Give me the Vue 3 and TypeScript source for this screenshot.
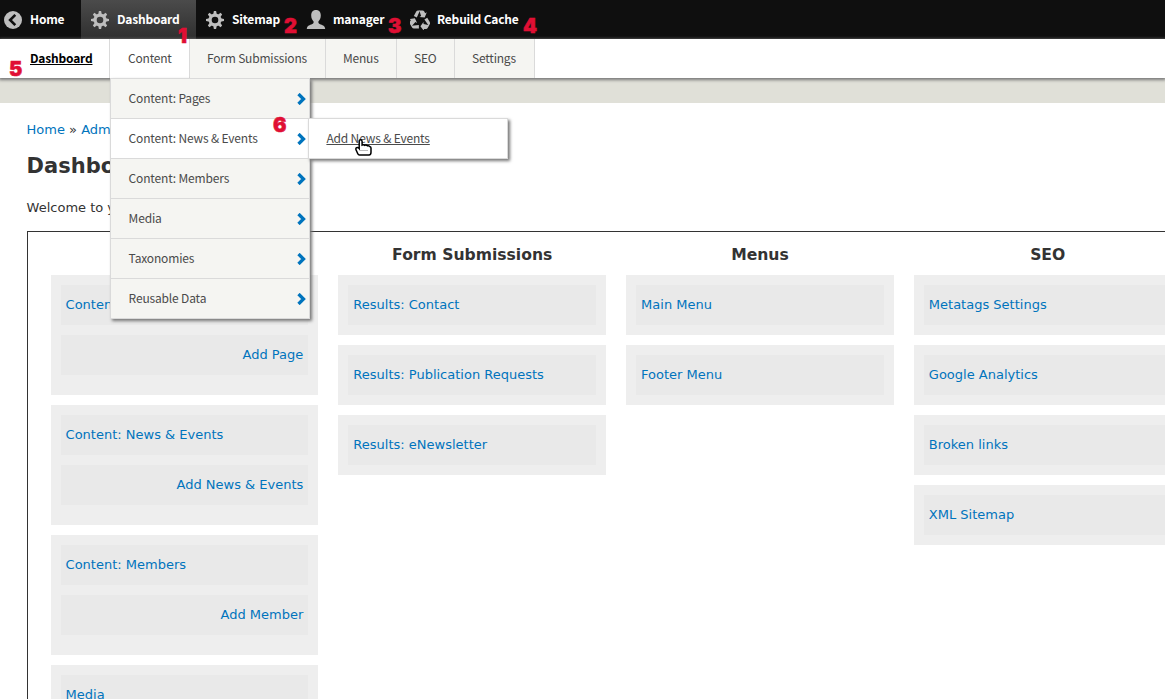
<script setup lang="ts">
interface TopItem { label: string; icon: 'back' | 'gear' | 'user' | 'recycle'; width: number; active?: boolean }
interface Tab { label: string; width: number; state?: 'current' | 'open' }
interface Card { title: string; action?: string }
interface Column { title: string; cards: Card[] }

const topItems: TopItem[] = [
  { label: 'Home', icon: 'back', width: 81 },
  { label: 'Dashboard', icon: 'gear', width: 115, active: true },
  { label: 'Sitemap', icon: 'gear', width: 101 },
  { label: 'manager', icon: 'user', width: 104 },
  { label: 'Rebuild Cache', icon: 'recycle', width: 140 },
]

const tabs: Tab[] = [
  { label: 'Dashboard', width: 110, state: 'current' },
  { label: 'Content', width: 80, state: 'open' },
  { label: 'Form Submissions', width: 136 },
  { label: 'Menus', width: 71 },
  { label: 'SEO', width: 58 },
  { label: 'Settings', width: 80 },
]

const menu: string[] = [
  'Content: Pages',
  'Content: News & Events',
  'Content: Members',
  'Media',
  'Taxonomies',
  'Reusable Data',
]
const openIndex = 1

const columns: Column[] = [
  {
    title: 'Content',
    cards: [
      { title: 'Content: Pages', action: 'Add Page' },
      { title: 'Content: News & Events', action: 'Add News & Events' },
      { title: 'Content: Members', action: 'Add Member' },
      { title: 'Media' },
    ],
  },
  {
    title: 'Form Submissions',
    cards: [
      { title: 'Results: Contact' },
      { title: 'Results: Publication Requests' },
      { title: 'Results: eNewsletter' },
    ],
  },
  { title: 'Menus', cards: [{ title: 'Main Menu' }, { title: 'Footer Menu' }] },
  {
    title: 'SEO',
    cards: [
      { title: 'Metatags Settings' },
      { title: 'Google Analytics' },
      { title: 'Broken links' },
      { title: 'XML Sitemap' },
    ],
  },
]

const teeth = [0, 45, 90, 135, 180, 225, 270, 315]
</script>

<template>
  <div class="page">
    <header class="topbar">
      <a v-for="item in topItems" :key="item.label" class="top-item" :class="{ active: item.active }" :style="{ width: item.width + 'px' }">
        <svg v-if="item.icon === 'back'" class="icon" viewBox="0 0 20 20">
          <circle cx="10" cy="10" r="9" fill="#bebebe" />
          <path d="M12.300 4.800 7.100 10l5.200 5.200" fill="none" stroke="#0f0f0f" stroke-width="2.600" />
        </svg>
        <svg v-else-if="item.icon === 'gear'" class="icon" viewBox="0 0 20 20">
          <path v-for="t in teeth" :key="t" d="M8.200 4.600 8.900 1h2.200l.7 3.600z" fill="#bebebe" :transform="`rotate(${t} 10 10)`" />
          <circle cx="10" cy="10" r="4.900" fill="none" stroke="#bebebe" stroke-width="3.200" />
        </svg>
        <svg v-else-if="item.icon === 'user'" class="icon" viewBox="0 0 20 20">
          <path d="M10 .1c3.200 0 4.800 2.200 4.800 5.300 0 2.700-1.100 4.600-2.400 6v1.200c0 .9.7 1.300 2.300 1.900 2.600 1 4.300 1.500 4.500 4.500H.8c.2-3 1.900-3.500 4.500-4.500 1.600-.6 2.300-1 2.300-1.900v-1.200c-1.300-1.400-2.400-3.300-2.400-6C5.200 2.300 6.800.1 10 .1z" fill="#bebebe" />
        </svg>
        <svg v-else class="icon" viewBox="0 0 20 20">
          <g v-for="r in [0, 120, 240]" :key="r" :transform="`rotate(${r} 10 10.700)`" fill="#bebebe">
            <path d="M3.800 5.900 6.300 1.400Q6.900.4 8 .4L10 .6 6.800 7.500z" />
            <path d="M9.300.4h3.300q1 0 1.500.9l1.100 1.900 1.600-.9-2.100 5.200-5.300-.5 1.700-1z" />
          </g>
        </svg>
        <span>{{ item.label }}</span>
      </a>
    </header>

    <nav class="tabs">
      <div v-for="tab in tabs" :key="tab.label" class="tab" :class="tab.state" :style="{ width: tab.width + 'px' }">
        <span>{{ tab.label }}</span>
        <ul v-if="tab.state === 'open'" class="menu">
          <li v-for="(entry, i) in menu" :key="entry" :class="{ hovered: i === openIndex }">
            <span>{{ entry }}</span>
            <svg class="chevron" viewBox="0 0 9 12"><path d="M1.500 1 6.500 6l-5 5" fill="none" stroke="#0074bd" stroke-width="3.300" /></svg>
            <div v-if="i === openIndex" class="submenu"><a>Add News &amp; Events</a></div>
          </li>
        </ul>
      </div>
    </nav>

    <div class="band"></div>

    <main>
      <div class="crumbs"><a>Home</a> » <a>Administration</a></div>
      <h1>Dashboard</h1>
      <p>Welcome to your dashboard.</p>
      <div class="board">
        <section v-for="col in columns" :key="col.title" class="column">
          <h2>{{ col.title }}</h2>
          <div v-for="card in col.cards" :key="card.title" class="card" :class="{ double: card.action }">
            <div class="row"><a>{{ card.title }}</a></div>
            <div v-if="card.action" class="row action"><a>{{ card.action }}</a></div>
          </div>
        </section>
      </div>
    </main>

    <b class="mark m1">1</b>
    <b class="mark m2">2</b>
    <b class="mark m3">3</b>
    <b class="mark m4">4</b>
    <b class="mark m5">5</b>
    <b class="mark m6">6</b>

    <svg class="cursor" viewBox="0 0 17 17">
      <path d="M4.200 9.500V2.500q0-1.700 1.400-1.700T7.100 2.500V6q1.500-.7 2.700.3 1.500-.6 2.600.5 1.400-.4 2.200.6 1.400.2 1.400 1.700v4.200q0 2.700-2 2.700H4.500q-1.200 0-1.700-1.200L.9 10.500q-.3-2 1.500-2 1 0 1.800 1z" fill="#fff" stroke="#000" stroke-width="1.500" />
      <path d="M5.500 11.500h8" stroke="#777" stroke-width="1" stroke-dasharray="1 1" />
    </svg>
  </div>
</template>

<style>
html,
body {
  margin: 0;
  overflow: hidden;
}
</style>

<style scoped>
.page {
  position: relative;
  width: 1165px;
  height: 699px;
  overflow: hidden;
  background: #fff;
  color: #333;
  font: 13px/20px "DejaVu Sans", sans-serif;
}
.topbar {
  display: flex;
  height: 39px;
  background: #0f0f0f;
  font: bold 12px/37px "Noto Sans CJK SC", sans-serif;
  letter-spacing: -0.2px;
  color: #fff;
}
.top-item {
  box-sizing: border-box;
  display: flex;
  align-items: center;
  padding-left: 9px;
  gap: 7px;
  white-space: nowrap;
}
.top-item span {
  padding-bottom: 2px;
}
.top-item:first-child {
  padding-left: 3px;
}
.top-item.active {
  background: linear-gradient(#4b4b4b, #2f2f2f);
}
.icon {
  width: 20px;
  height: 20px;
  flex: none;
}
.tabs {
  position: relative;
  z-index: 2;
  display: flex;
  height: 39px;
  background: #fff;
  box-shadow: 0 1px 3px 1px #777;
  font: 12px/38px "Noto Sans CJK SC", sans-serif;
  letter-spacing: -0.2px;
  color: #4a4a4a;
}
.tab {
  position: relative;
  box-sizing: border-box;
  padding-left: 17px;
  border-right: 1px solid #dadada;
  background: #f5f5f2;
  white-space: nowrap;
}
.tab.current {
  padding-left: 30px;
  background: #fff;
  color: #000;
  font-weight: bold;
  text-decoration: underline;
}
.tab.open {
  padding-left: 18px;
  background: #fff;
}
.menu {
  position: absolute;
  top: 39px;
  left: 0;
  width: 198px;
  margin: 0;
  padding: 0;
  border: 1px solid #dadada;
  border-top: 0;
  background: #f5f5f2;
  list-style: none;
  letter-spacing: -0.16px;
  box-shadow: 2px 2px 3px #777;
}
.menu li {
  position: relative;
  display: flex;
  align-items: center;
  justify-content: space-between;
  box-sizing: border-box;
  height: 40px;
  padding: 0 3px 1px 17.6px;
  border-top: 1px solid #dadada;
}
.menu li.hovered {
  background: #fff;
}
.chevron {
  width: 9px;
  height: 12px;
  margin-top: 2px;
}
.submenu {
  position: absolute;
  left: 197px;
  top: -1px;
  width: 198px;
  height: 39px;
  border: 1px solid #dadada;
  background: #fff;
  text-indent: 17.4px;
  text-decoration: underline;
  box-shadow: 2px 2px 3px #777;
}
.band {
  height: 25px;
  background: #e0e0d8;
}
main {
  padding: 17px 0 0 26.6px;
}
a {
  color: #0074bd;
}
.topbar a {
  color: #fff;
}
.submenu a {
  color: #4a4a4a;
}
h1 {
  margin: 11px 0 0;
  font-size: 21px;
  line-height: 30px;
}
p {
  margin: 17px 0 13px;
}
.board {
  display: flex;
  gap: 20px;
  width: 1200px;
  height: 600px;
  box-sizing: border-box;
  padding: 13px 0 0 23px;
  border: 1px solid #333;
}
.column {
  flex: none;
  width: 267.75px;
}
h2 {
  margin: 0 0 10px;
  text-align: center;
  font-size: 15.6px;
  line-height: 20px;
}
.card {
  margin-bottom: 10px;
  padding: 10px;
  background: #eee;
}
.card.double {
  padding-bottom: 20px;
}
.row {
  height: 40px;
  padding: 0 5px;
  background: #e9e9e9;
  line-height: 39px;
}
.action {
  margin-top: 10px;
  text-align: right;
}
.mark {
  position: absolute;
  z-index: 5;
  color: #e00f34;
  font: 900 20px/20px Inter, sans-serif;
  -webkit-text-stroke: 0.5px #e00f34;
}
.m1 { left: 178px; top: 26px; }
.m2 { left: 284px; top: 16px; }
.m3 { left: 388px; top: 16px; }
.m4 { left: 523px; top: 16px; }
.m5 { left: 9px; top: 59px; }
.m6 { left: 273px; top: 115px; }
.cursor {
  position: absolute;
  z-index: 6;
  left: 355px;
  top: 139px;
  width: 17px;
  height: 17px;
}
</style>
